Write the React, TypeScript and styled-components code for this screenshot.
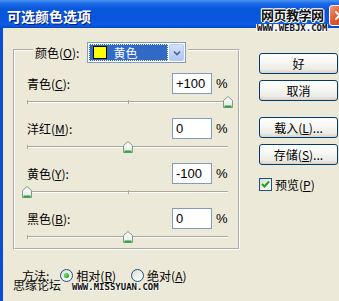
import React from 'react';
import styled, { createGlobalStyle } from 'styled-components';

const Global = createGlobalStyle`
  html, body { margin: 0; padding: 0; background: #ECE9D8; }
  body {
    font-family: "Noto Sans CJK SC", "Liberation Sans", sans-serif;
    font-size: 12px;
    color: #000;
  }
  u { text-decoration: underline; text-underline-offset: 1px; }
`;

const Window = styled.div`
  position: relative;
  width: 339px;
  height: 301px;
  overflow: hidden;
  display: flex;
  flex-direction: column;
  background: #ECE9D8;
`;

const TitleBar = styled.div`
  flex: none;
  height: 28px;
  display: flex;
  align-items: center;
  padding-left: 7px;
  background: linear-gradient(180deg, #4A93F2 0%, #1E6CE8 12%, #0858DC 30%, #0856DB 70%, #0A5EE4 88%, #0447C8 100%);
`;

const Title = styled.div`
  color: #fff;
  font-weight: bold;
  font-size: 14px;
  line-height: 16px;
  margin-top: 3px;
  text-shadow: 1px 1px 0 #0A1883;
`;

const CloseBtn = styled.div`
  margin-left: auto;
  margin-right: -11px;
  margin-top: 2px;
  width: 21px;
  height: 21px;
  box-sizing: border-box;
  border: 1px solid #fff;
  border-radius: 3px;
  background: linear-gradient(135deg, #F09A7C 0%, #E0592F 45%, #C8401C 100%);
  display: flex;
  align-items: center;
  justify-content: center;
`;

const Watermark = styled.div`
  position: absolute;
  left: 256px;
  top: 7px;
  display: flex;
  flex-direction: column;
  align-items: center;
  pointer-events: none;
`;

const MarkBig = styled.div`
  font-size: 13px;
  line-height: 16px;
  font-weight: bold;
  color: #111;
  letter-spacing: -0.5px;
  text-shadow: 1px 0 0 #fff, -1px 0 0 #fff, 0 1px 0 #fff, 0 -1px 0 #fff, 1px 1px 0 #fff, -1px -1px 0 #fff;
`;

const MarkSmall = styled.div`
  font-family: "DejaVu Sans Mono", monospace;
  font-weight: bold;
  font-size: 9px;
  line-height: 8px;
  color: #111;
  background: #F4F4F4;
  padding: 0 1px;
  margin-top: 1px;
`;

const Frame = styled.div`
  flex: 1;
  display: flex;
  border-left: 3px solid #0B4FD6;
  padding: 8px 0 0 10px;
`;

const LeftCol = styled.div`
  width: 227px;
  flex: none;
  display: flex;
  flex-direction: column;
`;

const Group = styled.fieldset`
  margin: 0;
  padding: 10px 5px 5px 7px;
  border: 2px groove #ffffff;
  min-width: 0;
  box-sizing: border-box;
  width: 227px;
  display: flex;
  flex-direction: column;
`;

const Legend = styled.legend`
  margin-left: 11px;
  padding: 6px 2px 0;
`;

const LegendInner = styled.div`
  display: flex;
  align-items: center;
  gap: 8px;
`;

const Dropdown = styled.div`
  width: 99px;
  height: 21px;
  box-sizing: border-box;
  border: 1px solid #7F9DB9;
  background: #fff;
  padding: 1px;
  display: flex;
  gap: 1px;
`;

const Selected = styled.div`
  flex: 1;
  background: #316AC5;
  outline: 1px dotted #fff;
  outline-offset: -1px;
  display: flex;
  align-items: center;
  gap: 6px;
  padding-left: 4px;
`;

const Swatch = styled.div`
  width: 14px;
  height: 13px;
  box-sizing: border-box;
  border: 1px solid #000;
  background: #FFFF00;
`;

const SelText = styled.span`
  color: #fff;
  font-size: 12px;
  line-height: 14px;
`;

const ArrowBtn = styled.div`
  width: 15px;
  box-sizing: border-box;
  border: 1px solid #B9CBF3;
  border-radius: 2px;
  background: linear-gradient(180deg, #D4E0FC 0%, #C1D3FB 50%, #B0C5F5 100%);
  display: flex;
  align-items: center;
  justify-content: center;
`;

const Block = styled.div`
  display: flex;
  flex-direction: column;
  & + & { margin-top: 10px; }
`;

const InputRow = styled.div`
  height: 21px;
  display: flex;
  align-items: center;
  padding: 0 5px;
`;

const Label = styled.span`
  flex: 1;
  font-size: 12px;
  line-height: 14px;
`;

const NumBox = styled.div`
  width: 40px;
  height: 21px;
  box-sizing: border-box;
  border: 1px solid #7F9DB9;
  background: #fff;
  display: flex;
  align-items: center;
  padding-left: 3px;
  font-family: "Liberation Sans", Arial, sans-serif;
  font-size: 13px;
`;

const Pct = styled.span`
  width: 12px;
  margin-left: 4px;
  font-family: "Liberation Sans", Arial, sans-serif;
  font-size: 13px;
`;

const Slider = styled.div`
  position: relative;
  height: 12px;
  margin-top: 2px;
`;

const Track = styled.div`
  position: relative;
  margin: 5px 5px 0;
  height: 0;
  border-top: 1px solid #A9A89E;
  border-bottom: 1px solid #ffffff;
  &::before, &::after {
    content: "";
    position: absolute;
    top: -2px;
    width: 1px;
    height: 4px;
    background: #A9A89E;
  }
  &::before { left: 0; }
  &::after { left: 50%; }
`;

const Thumb = styled.svg`
  position: absolute;
  top: 0;
  width: 10px;
  height: 12px;
`;

const MethodRow = styled.div`
  margin-top: 17px;
  padding-left: 9px;
  display: flex;
  align-items: center;
  height: 16px;
`;

const MethodLabel = styled.span`
  margin-right: 11px;
`;

const RadioItem = styled.div`
  display: flex;
  align-items: center;
  gap: 3px;
  & + & { margin-left: 15px; }
`;

const Radio = styled.div`
  width: 13px;
  height: 13px;
  box-sizing: border-box;
  border: 1px solid #1C5180;
  border-radius: 50%;
  background: linear-gradient(135deg, #DCDCD4 0%, #F4F4F0 60%, #fff 100%);
  display: flex;
  align-items: center;
  justify-content: center;
`;

const RadioDot = styled.div<{ $on: boolean }>`
  width: 5px;
  height: 5px;
  border-radius: 50%;
  background: radial-gradient(circle at 35% 35%, #7BE27A 0%, #2DB12C 60%, #1A8A19 100%);
  visibility: ${p => (p.$on ? 'visible' : 'hidden')};
`;

const BottomMark = styled.div`
  position: absolute;
  left: 13px;
  top: 278px;
  display: flex;
  align-items: center;
  gap: 11px;
  pointer-events: none;
`;

const BottomMarkCn = styled.span`
  font-size: 12px;
  line-height: 14px;
  color: #111;
`;

const BottomMarkEn = styled.span`
  font-family: "DejaVu Sans Mono", monospace;
  font-weight: bold;
  font-size: 9px;
  line-height: 8px;
  color: #111;
  margin-top: 4px;
  text-shadow: 0 1px 0 #fff, 1px 0 0 #fff;
`;

const RightCol = styled.div`
  margin-left: 19px;
  margin-top: 17px;
  width: 79px;
  flex: none;
  display: flex;
  flex-direction: column;
`;

const Button = styled.div<{ $gap?: number }>`
  height: 21px;
  box-sizing: border-box;
  margin-top: ${p => p.$gap ?? 0}px;
  border: 1px solid #003C74;
  border-radius: 3px;
  background: linear-gradient(180deg, #FFFFFF 0%, #F6F6F2 45%, #ECEBE5 80%, #D8D3C6 100%);
  display: flex;
  align-items: center;
  justify-content: center;
  font-size: 12px;
  line-height: 14px;
`;

const CheckRow = styled.div`
  margin-top: 11px;
  display: flex;
  align-items: center;
  gap: 3px;
`;

const CheckBox = styled.div`
  width: 13px;
  height: 13px;
  box-sizing: border-box;
  border: 1px solid #1C5180;
  background: linear-gradient(135deg, #DCDCD4 0%, #F4F4F0 60%, #fff 100%);
  display: flex;
  align-items: center;
  justify-content: center;
`;

type Row = { name: string; key: string; value: string; pos: number };

const rows: Row[] = [
  { name: '青色', key: 'C', value: '+100', pos: 1 },
  { name: '洋红', key: 'M', value: '0', pos: 0.5 },
  { name: '黄色', key: 'Y', value: '-100', pos: 0 },
  { name: '黑色', key: 'B', value: '0', pos: 0.5 },
];

const ThumbIcon: React.FC<{ pos: number }> = ({ pos }) => (
  <Thumb viewBox="0 0 10 12" style={{ left: `calc((100% - 10px) * ${pos})` }}>
    <defs>
      <linearGradient id="tg" x1="0" y1="0" x2="0" y2="1">
        <stop offset="0" stopColor="#ffffff" />
        <stop offset="1" stopColor="#E4E8E0" />
      </linearGradient>
    </defs>
    <path d="M0.5 4.5 L5 0.5 L9.5 4.5 V11.5 H0.5 Z" fill="url(#tg)" stroke="#7E9A8A" strokeWidth="1" />
    <path d="M1.5 10.5 H8.5" stroke="#2AA23F" strokeWidth="2" />
  </Thumb>
);

export default function App() {
  return (
    <>
      <Global />
      <Window>
        <TitleBar>
          <Title>可选颜色选项</Title>
          <CloseBtn>
            <svg width="9" height="9" viewBox="0 0 9 9">
              <path d="M1 1 L8 8 M8 1 L1 8" stroke="#fff" strokeWidth="2" strokeLinecap="square" />
            </svg>
          </CloseBtn>
        </TitleBar>
        <Watermark>
          <MarkBig>网页教学网</MarkBig>
          <MarkSmall>WWW.WEBJX.COM</MarkSmall>
        </Watermark>
        <Frame>
          <LeftCol>
            <Group>
              <Legend>
                <LegendInner>
                  <span>颜色(<u>O</u>):</span>
                  <Dropdown>
                    <Selected>
                      <Swatch />
                      <SelText>黄色</SelText>
                    </Selected>
                    <ArrowBtn>
                      <svg width="8" height="6" viewBox="0 0 8 6">
                        <path d="M1 1.5 L4 4.5 L7 1.5" fill="none" stroke="#4D6185" strokeWidth="1.6" />
                      </svg>
                    </ArrowBtn>
                  </Dropdown>
                </LegendInner>
              </Legend>
              {rows.map(r => (
                <Block key={r.key}>
                  <InputRow>
                    <Label>
                      {r.name}(<u>{r.key}</u>):
                    </Label>
                    <NumBox>{r.value}</NumBox>
                    <Pct>%</Pct>
                  </InputRow>
                  <Slider>
                    <Track />
                    <ThumbIcon pos={r.pos} />
                  </Slider>
                </Block>
              ))}
            </Group>
            <MethodRow>
              <MethodLabel>方法:</MethodLabel>
              <RadioItem>
                <Radio>
                  <RadioDot $on />
                </Radio>
                <span>
                  相对(<u>R</u>)
                </span>
              </RadioItem>
              <RadioItem>
                <Radio>
                  <RadioDot $on={false} />
                </Radio>
                <span>
                  绝对(<u>A</u>)
                </span>
              </RadioItem>
            </MethodRow>
          </LeftCol>
          <RightCol>
            <Button>好</Button>
            <Button $gap={6}>取消</Button>
            <Button $gap={16}>
              载入(<u>L</u>)...
            </Button>
            <Button $gap={6}>
              存储(<u>S</u>)...
            </Button>
            <CheckRow>
              <CheckBox>
                <svg width="9" height="9" viewBox="0 0 9 9">
                  <path d="M1 4 L3.5 6.5 L8 1.5" fill="none" stroke="#21A121" strokeWidth="2" />
                </svg>
              </CheckBox>
              <span>
                预览(<u>P</u>)
              </span>
            </CheckRow>
          </RightCol>
        </Frame>
        <BottomMark>
          <BottomMarkCn>思缘论坛</BottomMarkCn>
          <BottomMarkEn>WWW.MISSYUAN.COM</BottomMarkEn>
        </BottomMark>
      </Window>
    </>
  );
}
